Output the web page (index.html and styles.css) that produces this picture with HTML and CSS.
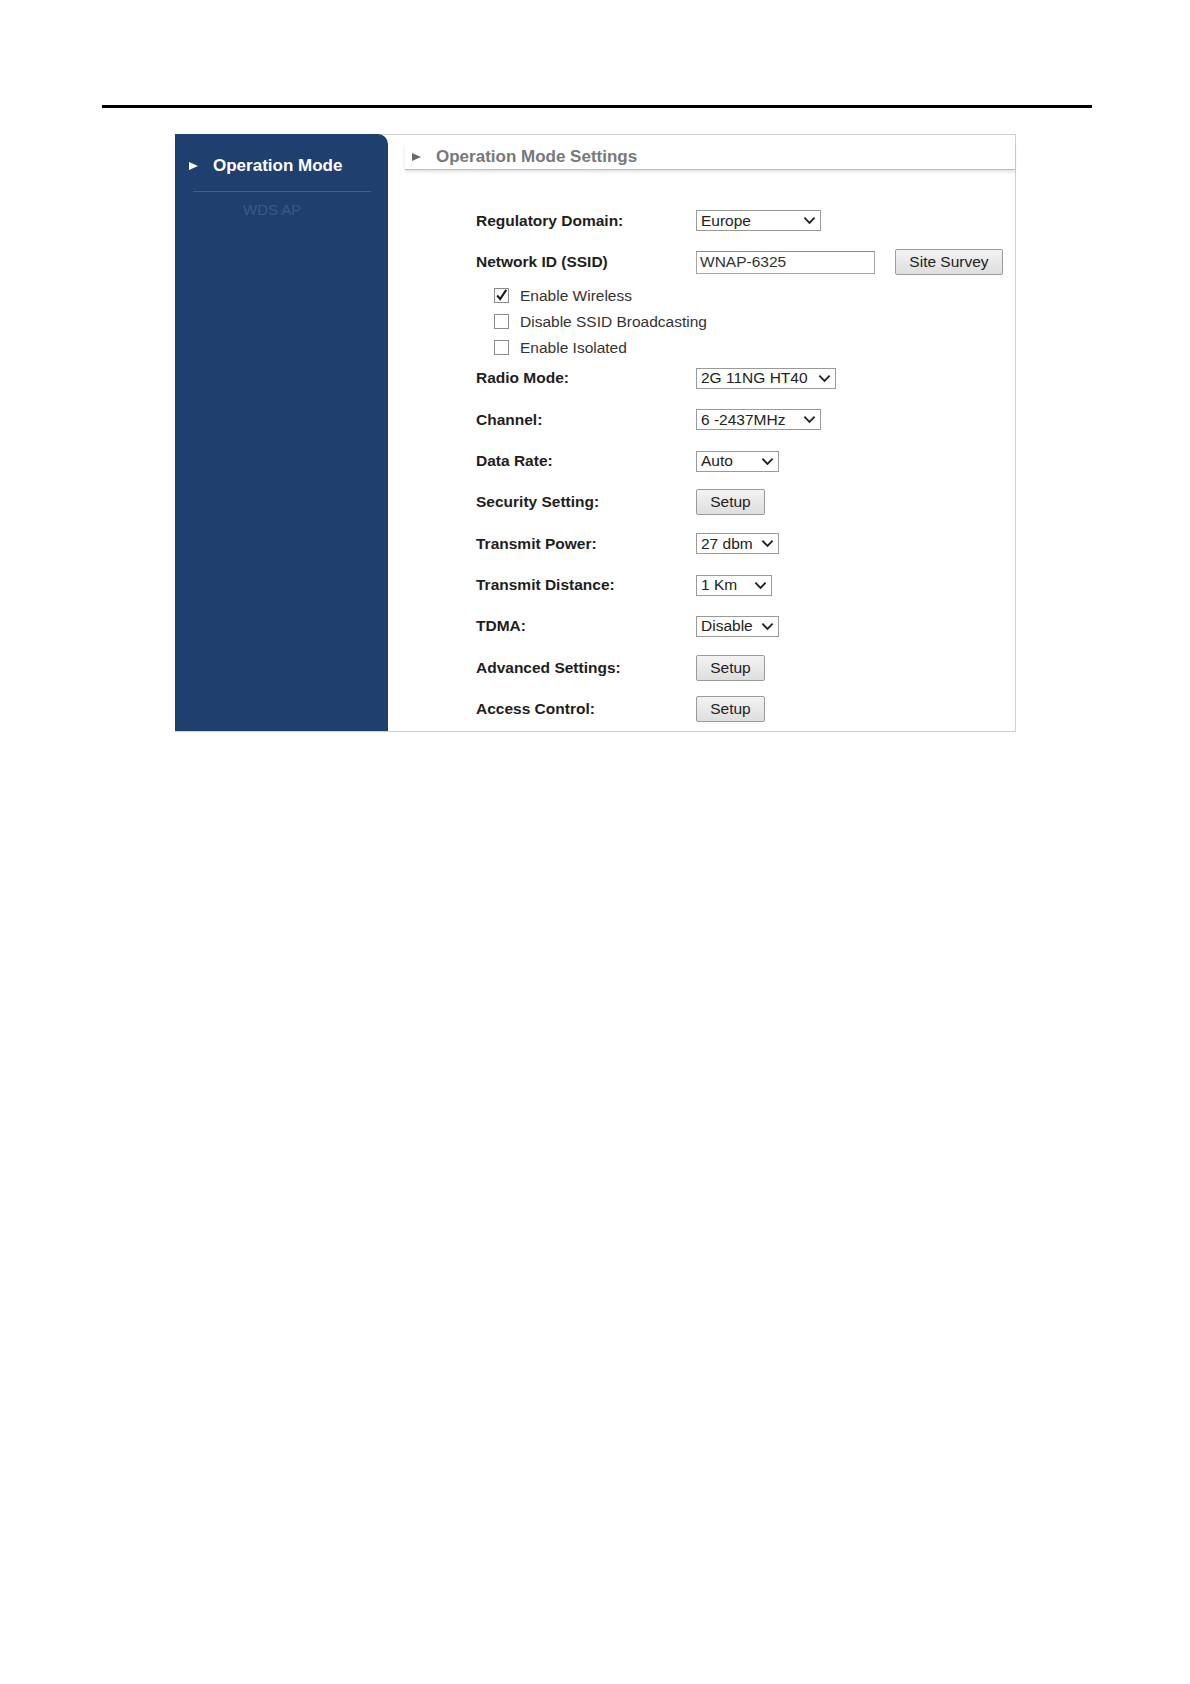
FILE: index.html
```html
<!DOCTYPE html>
<html lang="en">
<head>
<meta charset="utf-8">
<title>Operation Mode Settings</title>
<link rel="stylesheet" href="styles.css">
</head>
<body>
<div class="page">
  <div class="rule"></div>
  <div class="panel">
    <aside class="sidebar">
      <div class="nav-item"><span class="nav-arrow"></span><span class="nav-text">Operation Mode</span></div>
      <div class="nav-sep"></div>
      <div class="nav-sub">WDS AP</div>
    </aside>
    <main class="content">
      <div class="section-head"><span class="head-arrow"></span><span class="head-text">Operation Mode Settings</span></div>
      <div class="form">
        <div class="row">
          <span class="label">Regulatory Domain:</span>
          <div class="select w125"><span>Europe</span><svg class="chev" viewBox="0 0 14 9"><polyline points="1.5,1.5 7,7 12.5,1.5"/></svg></div>
        </div>
        <div class="row">
          <span class="label">Network ID (SSID)</span>
          <div class="ctl-group">
            <div class="input">WNAP-6325</div>
            <div class="button wide">Site Survey</div>
          </div>
        </div>
        <div class="checks">
          <div class="check-row"><span class="box checked"><svg viewBox="0 0 15 15"><polyline points="2.5,7.5 6,11.5 13,1"/></svg></span><span>Enable Wireless</span></div>
          <div class="check-row"><span class="box"></span><span>Disable SSID Broadcasting</span></div>
          <div class="check-row"><span class="box"></span><span>Enable Isolated</span></div>
        </div>
        <div class="row">
          <span class="label">Radio Mode:</span>
          <div class="select w140"><span>2G 11NG HT40</span><svg class="chev" viewBox="0 0 14 9"><polyline points="1.5,1.5 7,7 12.5,1.5"/></svg></div>
        </div>
        <div class="row">
          <span class="label">Channel:</span>
          <div class="select w125"><span>6 -2437MHz</span><svg class="chev" viewBox="0 0 14 9"><polyline points="1.5,1.5 7,7 12.5,1.5"/></svg></div>
        </div>
        <div class="row">
          <span class="label">Data Rate:</span>
          <div class="select w83"><span>Auto</span><svg class="chev" viewBox="0 0 14 9"><polyline points="1.5,1.5 7,7 12.5,1.5"/></svg></div>
        </div>
        <div class="row">
          <span class="label">Security Setting:</span>
          <div class="button">Setup</div>
        </div>
        <div class="row">
          <span class="label">Transmit Power:</span>
          <div class="select w83"><span>27 dbm</span><svg class="chev" viewBox="0 0 14 9"><polyline points="1.5,1.5 7,7 12.5,1.5"/></svg></div>
        </div>
        <div class="row">
          <span class="label">Transmit Distance:</span>
          <div class="select w76"><span>1 Km</span><svg class="chev" viewBox="0 0 14 9"><polyline points="1.5,1.5 7,7 12.5,1.5"/></svg></div>
        </div>
        <div class="row">
          <span class="label">TDMA:</span>
          <div class="select w83"><span>Disable</span><svg class="chev" viewBox="0 0 14 9"><polyline points="1.5,1.5 7,7 12.5,1.5"/></svg></div>
        </div>
        <div class="row">
          <span class="label">Advanced Settings:</span>
          <div class="button">Setup</div>
        </div>
        <div class="row">
          <span class="label">Access Control:</span>
          <div class="button">Setup</div>
        </div>
      </div>
    </main>
  </div>
</div>
</body>
</html>
```

FILE: styles.css
```css
html, body {
  margin: 0;
  padding: 0;
  background: #ffffff;
}
body {
  width: 1190px;
  height: 1684px;
  font-family: "Liberation Sans", Arial, sans-serif;
  color: #222222;
}
.page {
  padding-top: 105px;
}
.rule {
  margin-left: 102px;
  width: 990px;
  height: 3px;
  background: #000000;
}
.panel {
  margin-top: 26px;
  margin-left: 175px;
  width: 841px;
  height: 598px;
  display: flex;
  box-sizing: border-box;
  border-top: 1px solid #cfcfcf;
  border-right: 1px solid #cfcfcf;
  border-bottom: 1px solid #cfcfcf;
}
.sidebar {
  width: 213px;
  flex: none;
  background: #1f3f6e;
  border-top-right-radius: 10px;
  margin-top: -1px;
  padding-top: 7px;
  box-sizing: border-box;
}
.nav-item {
  height: 50px;
  display: flex;
  align-items: center;
  padding-left: 14px;
}
.nav-arrow {
  width: 0;
  height: 0;
  border-top: 4px solid transparent;
  border-bottom: 4px solid transparent;
  border-left: 9px solid #ffffff;
  margin-right: 15px;
}
.nav-text {
  color: #ffffff;
  font-size: 17px;
  font-weight: bold;
}
.nav-sep {
  margin-left: 18px;
  margin-right: 17px;
  height: 1px;
  background: #3e5f8e;
}
.nav-sub {
  height: 36px;
  line-height: 36px;
  padding-left: 68px;
  font-size: 15px;
  color: #3a5a87;
}
.content {
  flex: 1;
  padding-top: 9px;
}
.section-head {
  margin-left: 17px;
  height: 25px;
  display: flex;
  align-items: center;
  padding-left: 7px;
  border-bottom: 1px solid #bdbdbd;
  box-shadow: 0 2px 3px rgba(0, 0, 0, 0.12);
}
.head-arrow {
  width: 0;
  height: 0;
  border-top: 4px solid transparent;
  border-bottom: 4px solid transparent;
  border-left: 9px solid #6a6a6a;
  margin-right: 15px;
}
.head-text {
  font-size: 17px;
  font-weight: bold;
  color: #787878;
}
.form {
  margin-top: 30px;
  padding-left: 88px;
}
.row {
  height: 41.35px;
  display: grid;
  grid-template-columns: 220px auto;
  align-items: center;
  justify-items: start;
}
.label {
  font-size: 15.5px;
  font-weight: bold;
  color: #1e1e1e;
}
.ctl-group {
  display: flex;
  align-items: center;
  gap: 20px;
}
.select {
  height: 21px;
  box-sizing: border-box;
  border: 1px solid #9a9a9a;
  background: #ffffff;
  display: flex;
  align-items: center;
  justify-content: space-between;
  padding: 0 4px 0 4px;
  font-size: 15.5px;
  color: #222222;
}
.w125 { width: 125px; }
.w140 { width: 140px; }
.w83 { width: 83px; }
.w76 { width: 76px; }
.chev {
  width: 13px;
  height: 9px;
  flex: none;
}
.chev polyline {
  fill: none;
  stroke: #222222;
  stroke-width: 2;
}
.input {
  width: 179px;
  height: 23px;
  box-sizing: border-box;
  border: 1px solid #a5a5a5;
  border-top-color: #8a8a8a;
  padding-left: 3px;
  display: flex;
  align-items: center;
  font-size: 15.5px;
  color: #333333;
}
.button {
  width: 69px;
  height: 26px;
  box-sizing: border-box;
  border: 1px solid #9a9a9a;
  border-radius: 2px;
  background: linear-gradient(#f3f3f3, #dedede);
  display: flex;
  align-items: center;
  justify-content: center;
  font-size: 15.5px;
  color: #222222;
}
.button.wide {
  width: 108px;
}
.checks {
  padding-left: 18px;
  height: 75px;
  box-sizing: border-box;
}
.check-row {
  height: 26px;
  display: flex;
  align-items: center;
  font-size: 15.5px;
  color: #333333;
}
.box {
  width: 15px;
  height: 15px;
  box-sizing: border-box;
  border: 1px solid #8c8c8c;
  background: #ffffff;
  margin-right: 11px;
  flex: none;
  display: flex;
  overflow: visible;
}
.box svg {
  width: 13px;
  height: 13px;
  overflow: visible;
}
.box polyline {
  fill: none;
  stroke: #1a1a1a;
  stroke-width: 2.4;
}
```
